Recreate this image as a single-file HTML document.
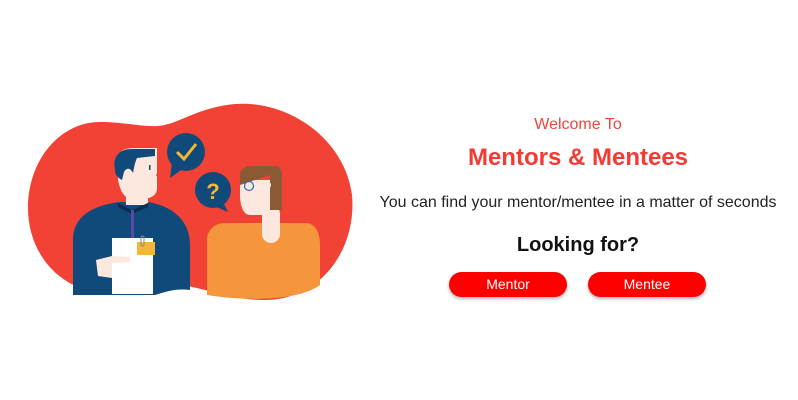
<!DOCTYPE html>
<html><head><style>
body{margin:0;width:798px;height:400px;background:#fff;font-family:"Liberation Sans",Arial,sans-serif;position:relative;overflow:hidden}
.t{position:absolute;left:370px;width:416px;text-align:center;white-space:nowrap}
.b{position:absolute;top:272px;height:25px;width:118px;border-radius:13px;background:#ff0000;color:#fff;font-size:14px;line-height:25px;text-align:center;box-shadow:0 2px 3px rgba(0,0,0,.3)}
</style></head><body>
<svg width="798" height="400" style="position:absolute;left:0;top:0">
<path d="M28,208 C28,160 60,122 100,122 C125,122 140,127 158,126 C180,124 195,108 235,104 C290,100 345,140 352,195 C357,250 320,300 265,300 C225,300 200,285 175,285 C150,285 125,296 95,292 C55,285 28,250 28,208 Z" fill="#f24236"/>
<!-- man -->
<path d="M73,295 L73,240 C73,215 95,205 120,202 L148,202 C172,206 190,220 190,245 L190,290 C175,288 165,292 155,295 Z" fill="#0f4a7a"/>
<rect x="126" y="180" width="22" height="25" fill="#fce8de"/>
<path d="M118,158 C118,152 124,148 134,148 L157,148 L157,188 C157,196 150,199 140,199 L132,199 C124,199 120,190 118,180 Z" fill="#fce8de"/>
<path d="M115,170 C112,156 120,149 132,149 L155,149 L155,156 L137,158 C135,162 134,168 133,173 C130,167 126,168 124,172 L122,180 C118,178 115,175 115,170 Z" fill="#0f4a7a"/>
<line x1="156" y1="175" x2="162" y2="175" stroke="#f24236" stroke-width="1.5"/>
<rect x="149" y="165" width="1.5" height="5" fill="#0f4a7a"/>
<path d="M118,203 L132,210 L148,203 L148,207 L132,214 L118,207Z" fill="#0b2e50"/>
<rect x="131" y="210" width="3" height="35" fill="#5a4aa0"/>
<rect x="112" y="238" width="41" height="56" fill="#fff"/>
<path d="M96,260 L112,256 L130,257 L130,262 L112,263 L112,278 L98,276 Z" fill="#fce8de"/>
<rect x="137" y="242" width="18" height="13" fill="#f7b733"/>
<rect x="141" y="236" width="3" height="10" rx="1.5" fill="none" stroke="#888" stroke-width="1"/>
<!-- bubbles -->
<circle cx="186" cy="152" r="19" fill="#0f4a7a"/>
<path d="M172,163 L170,178 L184,168Z" fill="#0f4a7a"/>
<path d="M177,152 L184,159 L196,144" stroke="#f7b733" stroke-width="3" fill="none"/>
<circle cx="213" cy="190" r="18" fill="#0f4a7a"/>
<path d="M222,200 L228,212 L212,205Z" fill="#0f4a7a"/>
<text x="213" y="199" font-size="22" font-weight="bold" fill="#f7b733" text-anchor="middle" font-family="Liberation Sans">?</text>
<!-- woman -->
<path d="M207,302 L207,240 C207,230 215,223 225,223 L305,223 C315,223 320,232 320,245 L320,285 C300,300 250,302 207,295 Z" fill="#f5953c"/>
<rect x="262" y="205" width="18" height="38" rx="9" fill="#fce8de"/>
<path d="M240,180 L275,180 L275,215 L250,215 C243,215 240,205 240,195 Z" fill="#fce8de"/>
<path d="M240,176 C240,170 244,166 250,166 L275,166 C280,166 282,170 282,176 L282,210 L270,210 L270,175 L240,185 Z" fill="#8b5a34"/>
<circle cx="249" cy="186" r="4.5" fill="#fce8de" stroke="#2a6fb0" stroke-width="1.2"/>
<ellipse cx="269" cy="185" rx="2" ry="3" fill="#fce8de"/>
</svg>
<div class="t" style="top:116px;font-size:16px;color:#f0443a">Welcome To</div>
<div class="t" style="top:144px;font-size:24px;font-weight:bold;color:#f33a33">Mentors &amp; Mentees</div>
<div class="t" style="top:194px;font-size:16px;color:#222">You can find your mentor/mentee in a matter of seconds</div>
<div class="t" style="top:234px;font-size:20px;font-weight:bold;color:#111">Looking for?</div>
<div class="b" style="left:449px">Mentor</div>
<div class="b" style="left:588px">Mentee</div>
</body></html>
